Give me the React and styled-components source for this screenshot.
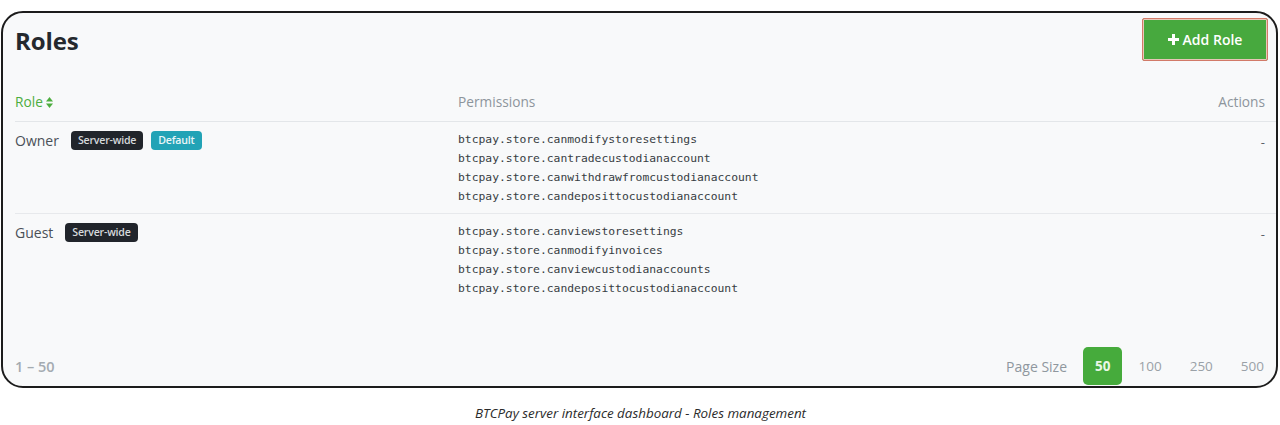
import React from "react";
import styled, { createGlobalStyle } from "styled-components";

const GlobalStyle = createGlobalStyle`
  html, body { margin: 0; padding: 0; background: #ffffff; }
  body { font-family: "Open Sans", "Liberation Sans", sans-serif; color: #343a40; }
  * { box-sizing: border-box; }
`;

const Page = styled.div`
  width: 1280px;
  height: 425px;
  padding-top: 11px;
  padding-left: 1px;
  display: flex;
  flex-direction: column;
`;

const Frame = styled.section`
  width: 1277px;
  height: 377px;
  border: 2px solid #1c1c1c;
  border-radius: 22px;
  background: #f8f9fa;
  padding: 5px 0 1px 12px;
  display: flex;
  flex-direction: column;
`;

const Header = styled.header`
  display: flex;
  justify-content: space-between;
  align-items: flex-start;
  padding-right: 8px;
`;

const Title = styled.h1`
  margin: 7px 0 0 0;
  font-size: 24px;
  line-height: 32px;
  font-weight: 700;
  color: #24292e;
  letter-spacing: -0.1px;
`;

const AddButton = styled.button`
  width: 126px;
  height: 43px;
  padding: 0;
  border: 1px solid #d27a68;
  background: #47a93e;
  box-shadow: inset 0 0 0 1px #e9c6b8;
  border-radius: 2px;
  color: #ffffff;
  font-family: "Open Sans", "Liberation Sans", sans-serif;
  font-size: 14px;
  font-weight: 600;
  display: inline-flex;
  align-items: center;
  justify-content: center;
  gap: 4px;
  cursor: pointer;
`;

const Table = styled.div`
  margin-top: 31px;
  display: grid;
  grid-template-columns: 443px 1fr auto;
`;

const HeadCell = styled.div`
  font-size: 13.7px;
  line-height: 20px;
  padding-bottom: 9px;
  border-bottom: 1px solid #e3e6e9;
  color: ${(p) => (p.$accent ? "#4cad3e" : "#8d959c")};
  padding-right: ${(p) => (p.$right ? "11px" : "0")};
  display: flex;
  align-items: center;
  justify-content: ${(p) => (p.$right ? "flex-end" : "flex-start")};
  gap: 3px;
`;

const Cell = styled.div`
  padding-top: ${(p) => p.$top || 8}px;
  padding-bottom: 7px;
  padding-right: ${(p) => (p.$right ? "11px" : "0")};
  border-bottom: ${(p) => (p.$last ? "none" : "1px solid #e7e9ec")};
  text-align: ${(p) => (p.$right ? "right" : "left")};
`;

const RoleLine = styled.div`
  display: flex;
  align-items: center;
  gap: 12px;
  height: 20px;
`;

const RoleName = styled.span`
  font-size: 14px;
  color: #4a5057;
`;

const Badges = styled.span`
  display: inline-flex;
  gap: 8px;
`;

const Badge = styled.span`
  display: inline-flex;
  align-items: center;
  height: 19px;
  padding: 0 7px;
  border-radius: 4px;
  font-size: 10.6px;
  font-weight: 600;
  letter-spacing: -0.2px;
  background: ${(p) => (p.$variant === "info" ? "#22a3b6" : "#21252b")};
  color: ${(p) => (p.$variant === "info" ? "#eaf6f8" : "#d6d9dc")};
`;

const PermList = styled.ul`
  list-style: none;
  margin: 0;
  padding: 0;
`;

const Perm = styled.li`
  font-family: "DejaVu Sans Mono", "Liberation Mono", monospace;
  font-size: 11.35px;
  line-height: 19px;
  color: #373d43;
`;

const Dash = styled.span`
  display: block;
  font-size: 13px;
  line-height: 18px;
  color: #5b6167;
`;

const Footer = styled.footer`
  margin-top: auto;
  display: flex;
  align-items: center;
  justify-content: space-between;
  height: 38px;
`;

const Range = styled.span`
  font-size: 14.5px;
  font-weight: 600;
  color: #a4abb1;
`;

const PageSize = styled.nav`
  display: flex;
  align-items: center;
  gap: 4px;
`;

const PageLabel = styled.span`
  font-size: 14px;
  color: #8f979e;
  margin-right: 12px;
`;

const SizeLink = styled.span`
  height: 38px;
  min-width: 39px;
  padding: 0 12px;
  border-radius: 5px;
  display: inline-flex;
  align-items: center;
  justify-content: center;
  font-size: 13.5px;
  font-weight: ${(p) => (p.$active ? 700 : 400)};
  background: ${(p) => (p.$active ? "#46ab3c" : "transparent")};
  color: ${(p) => (p.$active ? "#eaf7e6" : "#9aa1a7")};
`;

const Caption = styled.p`
  margin: 17px 0 0 0;
  text-align: center;
  font-family: "Open Sans", "Liberation Sans", sans-serif;
  font-style: italic;
  font-size: 13.4px;
  line-height: 16px;
  color: #2b2b2b;
`;

const SortIcon = () => (
  <svg width="7" height="11" viewBox="0 0 7 11" aria-hidden="true">
    <path d="M3.5 0 L7 4.4 H0 Z" fill="#4cad3e" />
    <path d="M3.5 11 L7 6.6 H0 Z" fill="#4cad3e" />
  </svg>
);

const PlusIcon = () => (
  <svg width="11" height="11" viewBox="0 0 11 11" aria-hidden="true">
    <path d="M4 0 H7 V4 H11 V7 H7 V11 H4 V7 H0 V4 H4 Z" fill="#ffffff" />
  </svg>
);

const roles = [
  {
    name: "Owner",
    badges: [
      { label: "Server-wide", variant: "dark" },
      { label: "Default", variant: "info" },
    ],
    permissions: [
      "btcpay.store.canmodifystoresettings",
      "btcpay.store.cantradecustodianaccount",
      "btcpay.store.canwithdrawfromcustodianaccount",
      "btcpay.store.candeposittocustodianaccount",
    ],
  },
  {
    name: "Guest",
    badges: [{ label: "Server-wide", variant: "dark" }],
    permissions: [
      "btcpay.store.canviewstoresettings",
      "btcpay.store.canmodifyinvoices",
      "btcpay.store.canviewcustodianaccounts",
      "btcpay.store.candeposittocustodianaccount",
    ],
  },
];

export default function App() {
  return (
    <>
      <GlobalStyle />
      <Page>
        <Frame>
          <Header>
            <Title>Roles</Title>
            <AddButton>
              <PlusIcon />
              Add Role
            </AddButton>
          </Header>
          <Table>
            <HeadCell $accent>
              Role <SortIcon />
            </HeadCell>
            <HeadCell>Permissions</HeadCell>
            <HeadCell $right>Actions</HeadCell>
            {roles.map((r, i) => {
              const last = i === roles.length - 1;
              return (
                <React.Fragment key={r.name}>
                  <Cell $last={last}>
                    <RoleLine>
                      <RoleName>{r.name}</RoleName>
                      <Badges>
                        {r.badges.map((b) => (
                          <Badge key={b.label} $variant={b.variant}>
                            {b.label}
                          </Badge>
                        ))}
                      </Badges>
                    </RoleLine>
                  </Cell>
                  <Cell $last={last}>
                    <PermList>
                      {r.permissions.map((p) => (
                        <Perm key={p}>{p}</Perm>
                      ))}
                    </PermList>
                  </Cell>
                  <Cell $last={last} $right $top={11}>
                    <Dash>-</Dash>
                  </Cell>
                </React.Fragment>
              );
            })}
          </Table>
          <Footer>
            <Range>1 – 50</Range>
            <PageSize>
              <PageLabel>Page Size</PageLabel>
              <SizeLink $active>50</SizeLink>
              <SizeLink>100</SizeLink>
              <SizeLink>250</SizeLink>
              <SizeLink>500</SizeLink>
            </PageSize>
          </Footer>
        </Frame>
        <Caption>BTCPay server interface dashboard - Roles management</Caption>
      </Page>
    </>
  );
}
